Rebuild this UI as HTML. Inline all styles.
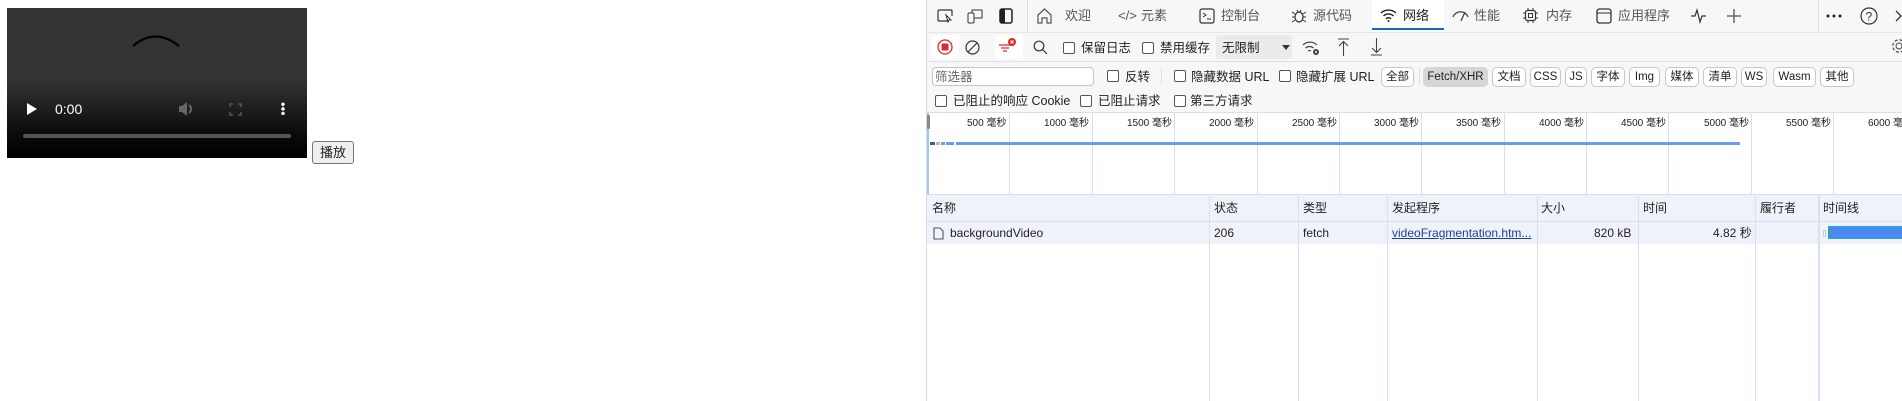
<!DOCTYPE html>
<html><head><meta charset="utf-8"><style>
*{box-sizing:border-box;margin:0;padding:0}
body{width:1902px;height:401px;overflow:hidden;background:#fff;position:relative;font-family:"Liberation Sans","Noto Sans CJK SC",sans-serif;font-size:12px;line-height:16px;color:#1f1f1f}
.a{position:absolute;white-space:nowrap;line-height:16px}
.t{color:#555}
.cb{position:absolute;width:12px;height:12px;border:1px solid #555;border-radius:2px;background:#fff}
.chip{position:absolute;top:67px;height:20px;border:1px solid #c8c8c8;border-radius:5px;background:#fff;font-size:11.5px;line-height:18px;text-align:center;white-space:nowrap}
.vl{position:absolute;width:1px;background:#d3e0f6}
.ml{position:absolute;top:116px;font-size:10px;line-height:16px;color:#222;white-space:nowrap}
svg{position:absolute;overflow:visible}
</style></head><body>
<!-- video -->
<div class="a" style="left:7px;top:8px;width:300px;height:150px;background:linear-gradient(#333 0%,#333 48%,#0a0a0a 85%,#000 100%)"></div>
<svg style="left:130px;top:33px" width="52" height="16"><path d="M3 13 Q25 -6 49 13" stroke="#000" stroke-width="2.2" fill="none"/></svg>
<svg style="left:26px;top:102px" width="12" height="14"><path d="M1 1 L11 7 L1 13Z" fill="#fff"/></svg>
<div class="a" style="left:55px;top:101px;color:#fff;font-size:14px">0:00</div>
<svg style="left:178px;top:102px" width="16" height="14"><path d="M1 4h3l5-4v14l-5-4H1z" fill="#666"/><path d="M11 3a5 5 0 0 1 0 8" stroke="#666" stroke-width="2" fill="none"/></svg>
<svg style="left:229px;top:103px" width="13" height="13"><path d="M1 4V1h3M9 1h3v3M12 9v3H9M4 12H1V9" stroke="#555" stroke-width="1.6" fill="none"/></svg>
<div class="a" style="left:281px;top:102px;width:4px;height:13px;background:radial-gradient(circle,#fff 1.5px,transparent 2px) 0 0/4px 4.6px"></div>
<div class="a" style="left:23px;top:134px;width:268px;height:4px;border-radius:2px;background:#555"></div>
<div class="a" style="left:312px;top:141px;width:42px;height:23px;border:1px solid #767676;border-radius:3px;background:#efefef;font-size:13px;line-height:21px;text-align:center">播放</div>

<!-- devtools -->
<div class="a" style="left:926px;top:0;width:976px;height:401px;background:#fff;border-left:1px solid #d0dcef"></div>
<div class="a" style="left:927px;top:0;width:975px;height:112px;background:#f7f7f7"></div>
<div class="a" style="left:927px;top:32px;width:975px;height:1px;background:#e6e6e6"></div>
<div class="a" style="left:927px;top:61px;width:975px;height:1px;background:#d3e0f6"></div>
<!-- tab row -->
<svg style="left:937px;top:9px" width="16" height="14"><path d="M12 12H2a1 1 0 0 1-1-1V2a1 1 0 0 1 1-1h12a1 1 0 0 1 1 1v5" stroke="#333" stroke-width="1.2" fill="none"/><path d="M9 6l5 5-2 0-1 2z" stroke="#333" fill="none"/></svg>
<svg style="left:967px;top:8px" width="16" height="16"><rect x="1" y="5" width="6" height="10" rx="1" stroke="#333" fill="none"/><path d="M5 5V2h10v8H7" stroke="#333" fill="none"/></svg>
<svg style="left:999px;top:8px" width="14" height="16"><rect x="1" y="1" width="12" height="14" rx="2" stroke="#222" stroke-width="1.5" fill="none"/><rect x="1" y="1" width="5" height="14" fill="#222"/></svg>
<div class="a" style="left:1027px;top:0;width:1px;height:32px;background:#ddd"></div>
<svg style="left:1037px;top:8px" width="15" height="16"><path d="M1 7L7.5 1 14 7v8h-4v-5H5v5H1z" stroke="#555" stroke-width="1.2" fill="none"/></svg>
<div class="a t" style="left:1065px;top:8px;font-size:13px">欢迎</div>
<div class="a t" style="left:1118px;top:8px;font-size:13px">&lt;/&gt;</div>
<div class="a t" style="left:1141px;top:8px;font-size:13px">元素</div>
<svg style="left:1199px;top:8px" width="16" height="16"><rect x="1" y="1" width="14" height="14" rx="2" stroke="#333" stroke-width="1.2" fill="none"/><path d="M4 5l3 2-3 2M8 11h4" stroke="#333" fill="none"/></svg>
<div class="a t" style="left:1221px;top:8px;font-size:13px">控制台</div>
<svg style="left:1291px;top:7px" width="16" height="17"><ellipse cx="8" cy="10" rx="4" ry="5" stroke="#333" stroke-width="1.2" fill="none"/><path d="M1 5l3 2M15 5l-3 2M1 10h3M15 10h-3M1 15l3-2M15 15l-3-2M6 3l1 2M10 3l-1 2" stroke="#333" fill="none"/></svg>
<div class="a t" style="left:1313px;top:8px;font-size:13px">源代码</div>
<div class="a" style="left:1372px;top:0;width:72px;height:32px;background:#fff"></div>
<div class="a" style="left:1372px;top:28px;width:72px;height:2px;background:#0f6cbd"></div>
<svg style="left:1380px;top:9px" width="17" height="13"><path d="M1 4a11 11 0 0 1 15 0M3.5 7a7 7 0 0 1 10 0M6 10a3 3 0 0 1 5 0" stroke="#222" stroke-width="1.4" fill="none"/><circle cx="8.5" cy="12" r="1" fill="#222"/></svg>
<div class="a" style="left:1403px;top:8px;font-size:13px">网络</div>
<svg style="left:1451px;top:9px" width="20" height="14"><path d="M2 8a8 8 0 0 1 15 0M10 12l4-9" stroke="#444" stroke-width="1.3" fill="none"/></svg>
<div class="a t" style="left:1474px;top:8px;font-size:13px">性能</div>
<svg style="left:1523px;top:8px" width="15" height="15"><rect x="2.5" y="2.5" width="10" height="10" rx="2" stroke="#333" stroke-width="1.2" fill="none"/><rect x="5.5" y="5.5" width="4" height="4" stroke="#333" fill="none"/><path d="M5 0v2M10 0v2M5 13v2M10 13v2M0 5h2M0 10h2M13 5h2M13 10h2" stroke="#333"/></svg>
<div class="a t" style="left:1546px;top:8px;font-size:13px">内存</div>
<svg style="left:1596px;top:8px" width="16" height="16"><rect x="1" y="1" width="14" height="14" rx="2.5" stroke="#333" stroke-width="1.3" fill="none"/><path d="M1 5h14" stroke="#333"/></svg>
<div class="a t" style="left:1618px;top:8px;font-size:13px">应用程序</div>
<svg style="left:1691px;top:9px" width="18" height="14"><path d="M0 7h4l2-6 3 12 2-6h4" stroke="#333" stroke-width="1.2" fill="none"/></svg>
<svg style="left:1727px;top:9px" width="14" height="14"><path d="M7 0v14M0 7h14" stroke="#555" stroke-width="1.3"/></svg>
<div class="a" style="left:1818px;top:0;width:1px;height:32px;background:#ddd"></div>
<svg style="left:1826px;top:14px" width="16" height="4"><circle cx="2" cy="2" r="1.5" fill="#222"/><circle cx="8" cy="2" r="1.5" fill="#222"/><circle cx="14" cy="2" r="1.5" fill="#222"/></svg>
<svg style="left:1860px;top:7px" width="18" height="18"><circle cx="9" cy="9" r="8" stroke="#333" stroke-width="1.2" fill="none"/><text x="5.5" y="13.5" font-size="12" font-family="Liberation Sans" fill="#333">?</text></svg>
<svg style="left:1895px;top:10px" width="8" height="12"><path d="M1 1l5 5-5 5" stroke="#333" stroke-width="1.3" fill="none"/></svg>
<!-- toolbar row -->
<div class="a" style="left:931px;top:35px;width:28px;height:24px;background:#fff"></div>
<svg style="left:937px;top:39px" width="16" height="16"><circle cx="8" cy="8" r="7" stroke="#d92c2c" stroke-width="1.3" fill="none"/><rect x="4.5" y="4.5" width="7" height="7" rx="1" fill="#d92c2c"/></svg>
<svg style="left:965px;top:40px" width="15" height="15"><circle cx="7.5" cy="7.5" r="6.5" stroke="#333" stroke-width="1.2" fill="none"/><path d="M3 12L12 3" stroke="#333" stroke-width="1.2"/></svg>
<div class="a" style="left:995px;top:35px;width:28px;height:24px;background:#fff"></div>
<svg style="left:998px;top:38px" width="20" height="16"><path d="M1 7h12M3 10h8M5 13h4" stroke="#d92c2c" stroke-width="1.2"/><circle cx="14" cy="4" r="4" fill="#d92c2c"/><path d="M12.5 2.5l3 3M15.5 2.5l-3 3" stroke="#fff"/></svg>
<svg style="left:1033px;top:40px" width="15" height="15"><circle cx="6" cy="6" r="4.8" stroke="#333" stroke-width="1.2" fill="none"/><path d="M9.5 9.5l4.5 4.5" stroke="#333" stroke-width="1.2"/></svg>
<div class="cb" style="left:1063px;top:42px"></div><div class="a" style="left:1081px;top:40px;font-size:12.5px">保留日志</div>
<div class="cb" style="left:1142px;top:42px"></div><div class="a" style="left:1160px;top:40px;font-size:12.5px">禁用缓存</div>
<div class="a" style="left:1216px;top:35px;width:76px;height:24px;background:#ebebeb;border-radius:3px"></div>
<div class="a" style="left:1222px;top:40px;font-size:12.5px">无限制</div>
<svg style="left:1282px;top:45px" width="8" height="5"><path d="M0 0h8L4 5z" fill="#333"/></svg>
<svg style="left:1302px;top:40px" width="18" height="16"><path d="M1 5a10 10 0 0 1 14 0M3.5 8a6 6 0 0 1 8 0M6 11a3 3 0 0 1 3 0" stroke="#444" stroke-width="1.2" fill="none"/><circle cx="14" cy="12" r="3" fill="#444"/><circle cx="14" cy="12" r="1" fill="#fff"/></svg>
<svg style="left:1337px;top:38px" width="13" height="18"><path d="M1 1h11M6.5 4v14M2 8l4.5-4.5L11 8" stroke="#444" stroke-width="1.1" fill="none"/></svg>
<svg style="left:1370px;top:38px" width="13" height="18"><path d="M1 17h11M6.5 0v14M2 10l4.5 4.5L11 10" stroke="#444" stroke-width="1.1" fill="none"/></svg>
<svg style="left:1891px;top:38px" width="16" height="16"><circle cx="8" cy="8" r="3" stroke="#444" fill="none"/><circle cx="8" cy="8" r="6.2" stroke="#444" stroke-width="1.2" stroke-dasharray="3 1.9" fill="none"/></svg>
<!-- filter row -->
<div class="a" style="left:932px;top:67px;width:162px;height:19px;background:#fff;border:1px solid #c4c4c4;border-radius:4px"></div>
<div class="a t" style="left:935px;top:69px;font-size:12.5px;color:#666">筛选器</div>
<div class="cb" style="left:1107px;top:70px"></div><div class="a" style="left:1125px;top:69px;font-size:12.5px">反转</div>
<div class="a" style="left:1161px;top:68px;width:1px;height:16px;background:#d3e0f6"></div>
<div class="cb" style="left:1174px;top:70px"></div><div class="a" style="left:1191px;top:69px;font-size:12.5px">隐藏数据 URL</div>
<div class="cb" style="left:1279px;top:70px"></div><div class="a" style="left:1296px;top:69px;font-size:12.5px">隐藏扩展 URL</div>
<div class="chip" style="left:1381px;width:33px">全部</div>
<div class="a" style="left:1419px;top:68px;width:1px;height:16px;background:#d3e0f6"></div>
<div class="chip" style="left:1423px;width:65px;background:#d6d6d6;border-color:#d6d6d6">Fetch/XHR</div>
<div class="chip" style="left:1492px;width:34px">文档</div>
<div class="chip" style="left:1530px;width:31px">CSS</div>
<div class="chip" style="left:1565px;width:22px">JS</div>
<div class="chip" style="left:1591px;width:34px">字体</div>
<div class="chip" style="left:1629px;width:31px">Img</div>
<div class="chip" style="left:1665px;width:34px">媒体</div>
<div class="chip" style="left:1703px;width:34px">清单</div>
<div class="chip" style="left:1741px;width:26px">WS</div>
<div class="chip" style="left:1773px;width:43px">Wasm</div>
<div class="chip" style="left:1820px;width:34px">其他</div>
<!-- checkbox row -->
<div class="cb" style="left:935px;top:95px"></div><div class="a" style="left:953px;top:93px;font-size:12.5px">已阻止的响应 Cookie</div>
<div class="cb" style="left:1080px;top:95px"></div><div class="a" style="left:1098px;top:93px;font-size:12.5px">已阻止请求</div>
<div class="cb" style="left:1174px;top:95px"></div><div class="a" style="left:1190px;top:93px;font-size:12.5px">第三方请求</div>
<!-- overview -->
<div class="a" style="left:927px;top:112px;width:975px;height:1px;background:#d3e0f6"></div>
<div class="a" style="left:927px;top:113px;width:2px;height:81px;background:#a8c4f0"></div>
<div class="a" style="left:927px;top:115px;width:3px;height:14px;background:#888;border-radius:1px"></div>
<div class="vl" style="left:1009px;top:113px;height:81px"></div>
<div class="vl" style="left:1092px;top:113px;height:81px"></div>
<div class="vl" style="left:1174px;top:113px;height:81px"></div>
<div class="vl" style="left:1257px;top:113px;height:81px"></div>
<div class="vl" style="left:1339px;top:113px;height:81px"></div>
<div class="vl" style="left:1421px;top:113px;height:81px"></div>
<div class="vl" style="left:1504px;top:113px;height:81px"></div>
<div class="vl" style="left:1586px;top:113px;height:81px"></div>
<div class="vl" style="left:1668px;top:113px;height:81px"></div>
<div class="vl" style="left:1751px;top:113px;height:81px"></div>
<div class="vl" style="left:1833px;top:113px;height:81px"></div>
<div class="ml" style="left:967px">500 毫秒</div>
<div class="ml" style="left:1044px">1000 毫秒</div>
<div class="ml" style="left:1127px">1500 毫秒</div>
<div class="ml" style="left:1209px">2000 毫秒</div>
<div class="ml" style="left:1292px">2500 毫秒</div>
<div class="ml" style="left:1374px">3000 毫秒</div>
<div class="ml" style="left:1456px">3500 毫秒</div>
<div class="ml" style="left:1539px">4000 毫秒</div>
<div class="ml" style="left:1621px">4500 毫秒</div>
<div class="ml" style="left:1704px">5000 毫秒</div>
<div class="ml" style="left:1786px">5500 毫秒</div>
<div class="ml" style="left:1868px">6000 毫秒</div>
<div class="a" style="left:930px;top:142px;width:5px;height:3px;background:#2d6a7a"></div>
<div class="a" style="left:936px;top:142px;width:4px;height:3px;background:#d59cf0"></div>
<div class="a" style="left:941px;top:142px;width:4px;height:3px;background:#5bbd72"></div>
<div class="a" style="left:946px;top:142px;width:8px;height:3px;background:#6a9df2"></div>
<div class="a" style="left:956px;top:142px;width:784px;height:3px;background:#6a9df2"></div>
<!-- grid -->
<div class="a" style="left:927px;top:194px;width:975px;height:50px;background:#eff3f9;border-top:1px solid #d3e0f6"></div>
<div class="a" style="left:927px;top:221px;width:975px;height:1px;background:#d3e0f6"></div>
<div class="vl" style="left:1209px;top:194px;height:207px"></div>
<div class="vl" style="left:1298px;top:194px;height:207px"></div>
<div class="vl" style="left:1387px;top:194px;height:207px"></div>
<div class="vl" style="left:1537px;top:194px;height:207px"></div>
<div class="vl" style="left:1638px;top:194px;height:207px"></div>
<div class="vl" style="left:1755px;top:194px;height:207px"></div>
<div class="vl" style="left:1818px;top:194px;height:207px;width:2px"></div>
<div class="a" style="left:932px;top:200px">名称</div>
<div class="a" style="left:1214px;top:200px">状态</div>
<div class="a" style="left:1303px;top:200px">类型</div>
<div class="a" style="left:1392px;top:200px">发起程序</div>
<div class="a" style="left:1541px;top:200px">大小</div>
<div class="a" style="left:1643px;top:200px">时间</div>
<div class="a" style="left:1760px;top:200px">履行者</div>
<div class="a" style="left:1823px;top:200px">时间线</div>
<svg style="left:933px;top:227px" width="11" height="13"><path d="M1 1h6l3 3v8H1z" stroke="#555" stroke-width="1.1" fill="none"/></svg>
<div class="a" style="left:950px;top:225px">backgroundVideo</div>
<div class="a" style="left:1214px;top:225px">206</div>
<div class="a" style="left:1303px;top:225px">fetch</div>
<div class="a" style="left:1392px;top:225px;color:#1a3f99;text-decoration:underline">videoFragmentation.htm...</div>
<div class="a" style="left:1594px;top:225px">820 kB</div>
<div class="a" style="left:1713px;top:225px">4.82 秒</div>
<div class="a" style="left:1823px;top:230px;width:3px;height:7px;border:1px solid #ccc"></div>
<div class="a" style="left:1828px;top:226px;width:74px;height:13px;background:#4a8af0;border-left:1px solid #2ab34a;border-top:1px solid #1fa8e0;border-bottom:1px solid #1fa8e0"></div>
</body></html>
